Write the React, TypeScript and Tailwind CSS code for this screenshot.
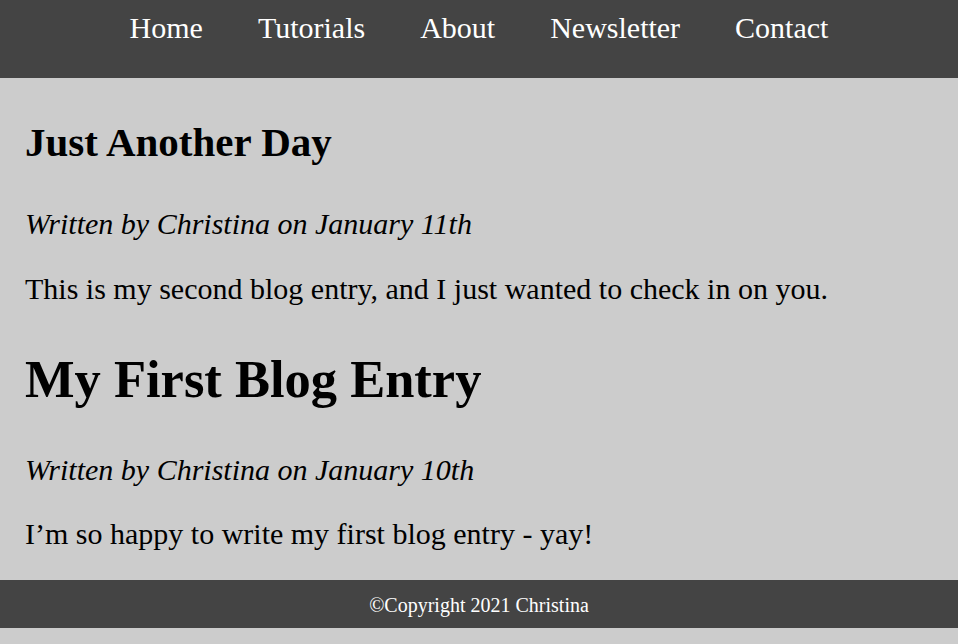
const NAV_LINKS = ["Home", "Tutorials", "About", "Newsletter", "Contact"];

const POSTS = [
  {
    title: "Just Another Day",
    size: "h2",
    byline: "Written by Christina on January 11th",
    body: "This is my second blog entry, and I just wanted to check in on you.",
  },
  {
    title: "My First Blog Entry",
    size: "h1",
    byline: "Written by Christina on January 10th",
    body: "I\u2019m so happy to write my first blog entry - yay!",
  },
];

export default function App() {
  return (
    <div className="min-h-screen bg-[#cccccc] text-black font-['Liberation_Serif','Times_New_Roman',serif]">
      {/* Nav */}
      <nav className="h-[78px] bg-[#444444] pt-[11px]">
        <ul className="flex justify-center">
          {NAV_LINKS.map((link) => (
            <li key={link} className="px-[27.5px] text-[30px] leading-[34px] text-white">
              {link}
            </li>
          ))}
        </ul>
      </nav>

      {/* Posts */}
      <main className="px-[25px] pt-[41px] pb-[29px]">
        {POSTS.map((post, i) => (
          <article key={post.title} className={i > 0 ? "mt-[43px]" : ""}>
            {post.size === "h2" ? (
              <h2 className="text-[41px] leading-[46px] font-bold">{post.title}</h2>
            ) : (
              <h1 className="text-[52.5px] leading-[60px] font-bold">{post.title}</h1>
            )}
            <p className={`${post.size === "h2" ? "mt-[42px]" : "mt-[44px]"} text-[30px] leading-[34px] italic`}>
              {post.byline}
            </p>
            <p className={`${post.size === "h2" ? "mt-[31px]" : "mt-[30px]"} text-[30px] leading-[34px]`}>
              {post.body}
            </p>
          </article>
        ))}
      </main>

      {/* Footer */}
      <footer className="h-[48px] bg-[#444444] pt-[2px] flex items-center justify-center text-[20px] text-white">
        ©Copyright 2021 Christina
      </footer>
    </div>
  );
}
